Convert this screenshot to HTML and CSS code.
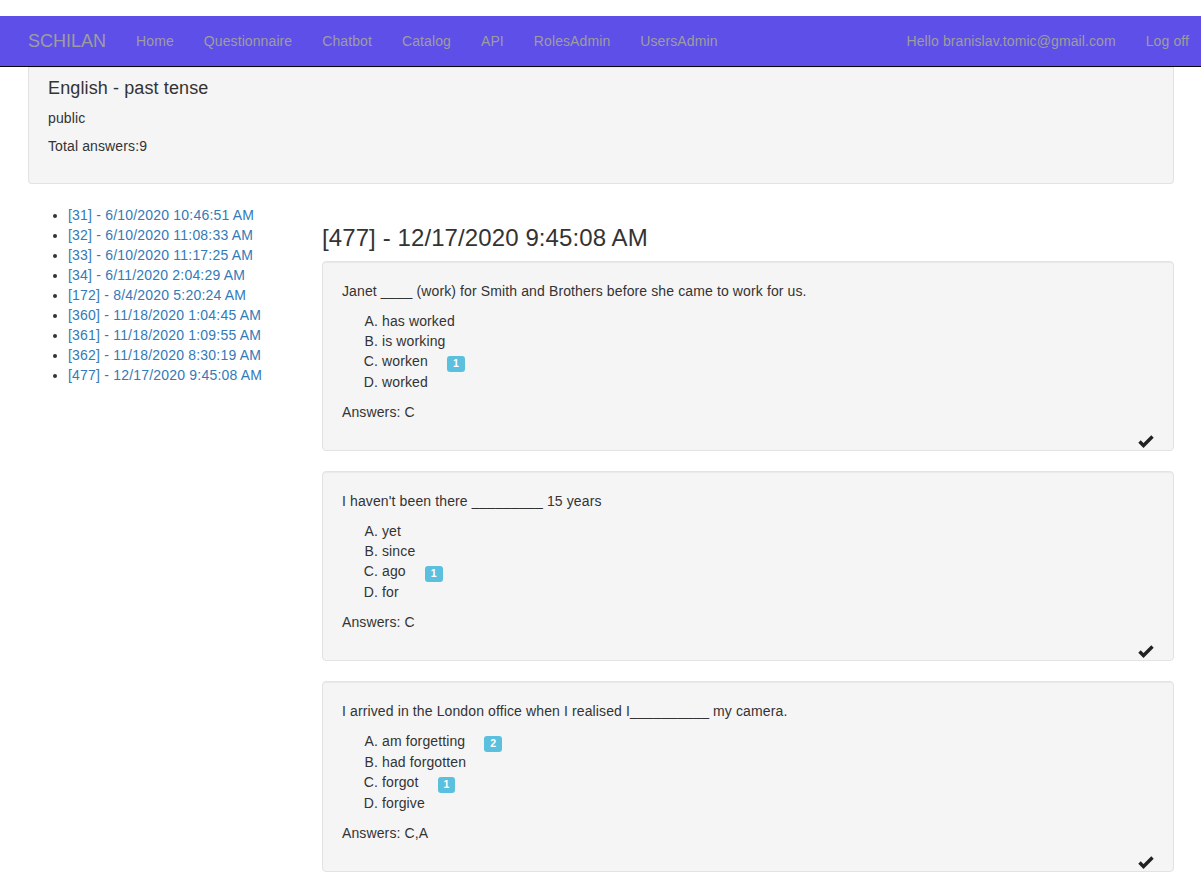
FILE: index.html
```html
<!DOCTYPE html>
<html>
<head>
<meta charset="utf-8">
<link rel="stylesheet" href="styles.css">
</head>
<body>
<div class="topgap"></div>
<nav class="navbar">
  <div class="nav-left">
    <a class="brand" href="#">SCHILAN</a>
    <a class="nav-link" href="#">Home</a>
    <a class="nav-link" href="#">Questionnaire</a>
    <a class="nav-link" href="#">Chatbot</a>
    <a class="nav-link" href="#">Catalog</a>
    <a class="nav-link" href="#">API</a>
    <a class="nav-link" href="#">RolesAdmin</a>
    <a class="nav-link" href="#">UsersAdmin</a>
  </div>
  <div class="nav-right">
    <a class="nav-link" href="#">Hello branislav.tomic@gmail.com</a>
    <a class="nav-link last" href="#">Log off</a>
  </div>
</nav>
<div class="main">
  <div class="well header-well">
    <h4 class="title">English - past tense</h4>
    <p class="vis">public</p>
    <p>Total answers:9</p>
  </div>
  <div class="columns">
    <div class="side">
      <ul class="runs">
        <li><a href="#">[31] - 6/10/2020 10:46:51 AM</a></li>
        <li><a href="#">[32] - 6/10/2020 11:08:33 AM</a></li>
        <li><a href="#">[33] - 6/10/2020 11:17:25 AM</a></li>
        <li><a href="#">[34] - 6/11/2020 2:04:29 AM</a></li>
        <li><a href="#">[172] - 8/4/2020 5:20:24 AM</a></li>
        <li><a href="#">[360] - 11/18/2020 1:04:45 AM</a></li>
        <li><a href="#">[361] - 11/18/2020 1:09:55 AM</a></li>
        <li><a href="#">[362] - 11/18/2020 8:30:19 AM</a></li>
        <li><a href="#">[477] - 12/17/2020 9:45:08 AM</a></li>
      </ul>
    </div>
    <div class="content">
      <h3 class="run-title">[477] - 12/17/2020 9:45:08 AM</h3>

      <div class="well question">
        <p>Janet ____ (work) for Smith and Brothers before she came to work for us.</p>
        <ol class="options">
          <li>has worked</li>
          <li>is working</li>
          <li>worken <span class="label">1</span></li>
          <li>worked</li>
        </ol>
        <p>Answers: C</p>
        <div class="foot"><svg class="ok" width="16" height="13" viewBox="0 0 16 13"><polyline points="1.5,6.5 5.5,10.5 14.5,1.5" fill="none" stroke="#222" stroke-width="3.4"/></svg></div>
      </div>

      <div class="well question">
        <p>I haven't been there _________ 15 years</p>
        <ol class="options">
          <li>yet</li>
          <li>since</li>
          <li>ago <span class="label">1</span></li>
          <li>for</li>
        </ol>
        <p>Answers: C</p>
        <div class="foot"><svg class="ok" width="16" height="13" viewBox="0 0 16 13"><polyline points="1.5,6.5 5.5,10.5 14.5,1.5" fill="none" stroke="#222" stroke-width="3.4"/></svg></div>
      </div>

      <div class="well question">
        <p>I arrived in the London office when I realised I__________ my camera.</p>
        <ol class="options">
          <li>am forgetting <span class="label">2</span></li>
          <li>had forgotten</li>
          <li>forgot <span class="label">1</span></li>
          <li>forgive</li>
        </ol>
        <p>Answers: C,A</p>
        <div class="foot"><svg class="ok" width="16" height="13" viewBox="0 0 16 13"><polyline points="1.5,6.5 5.5,10.5 14.5,1.5" fill="none" stroke="#222" stroke-width="3.4"/></svg></div>
      </div>
    </div>
  </div>
</div>
</body>
</html>
```

FILE: styles.css
```css
* { box-sizing: border-box; }
html, body {
  margin: 0;
  padding: 0;
  background: #fff;
}
body {
  font-family: "Liberation Sans", Arial, Helvetica, sans-serif;
  font-size: 14px;
  line-height: 20px;
  color: #333;
}
a { color: #337ab7; text-decoration: none; }
p { margin: 0 0 10px; }

.topgap { height: 16px; }

.navbar {
  height: 51px;
  background: #5f4fe9;
  border-bottom: 1px solid #080808;
  display: flex;
  justify-content: space-between;
  align-items: center;
  padding-left: 13px;
}
.nav-left, .nav-right {
  display: flex;
  align-items: center;
}
.brand {
  color: #9d9d9d;
  font-size: 18px;
  line-height: 20px;
  padding: 15px 15px;
}
.nav-link {
  color: #9d9d9d;
  font-size: 14px;
  line-height: 20px;
  padding: 15px 15px;
  letter-spacing: 0.1px;
}
.nav-link.last { padding-right: 12px; }

.main {
  padding: 0 27px 0 28px;
  letter-spacing: 0.12px;
}

.well {
  background: #f5f5f5;
  border: 1px solid #e3e3e3;
  border-radius: 4px;
  box-shadow: inset 0 1px 1px rgba(0,0,0,0.05);
  margin-bottom: 20px;
}
.header-well {
  border-top: none;
  border-radius: 0 0 4px 4px;
  padding: 11px 19px 17px;
  margin-bottom: 21px;
}
.header-well .vis { margin-bottom: 8px; }
.title {
  font-size: 18px;
  font-weight: 500;
  line-height: 20px;
  margin: 0 0 10px;
}

.columns {
  display: grid;
  grid-template-columns: 264px 1fr;
  column-gap: 30px;
}
.runs {
  margin: 0;
  padding-left: 40px;
  letter-spacing: 0.2px;
}
.run-title {
  font-size: 24px;
  font-weight: 500;
  line-height: 26px;
  margin: 20px 0 10px;
  letter-spacing: 0.1px;
}
.question {
  padding: 19px 19px 0;
}
.options {
  list-style-type: upper-alpha;
  padding-left: 40px;
  margin: 0 0 10px;
}
.label {
  display: inline-block;
  margin-left: 15px;
  background: #5bc0de;
  color: #fff;
  font-weight: bold;
  font-size: 10.5px;
  line-height: 11px;
  padding: 2px 6px 3px;
  border-radius: 3px;
  vertical-align: -1px;
  letter-spacing: 0;
}
.foot {
  height: 18px;
  display: flex;
  justify-content: flex-end;
  align-items: center;
}
.ok { display: block; }
```
